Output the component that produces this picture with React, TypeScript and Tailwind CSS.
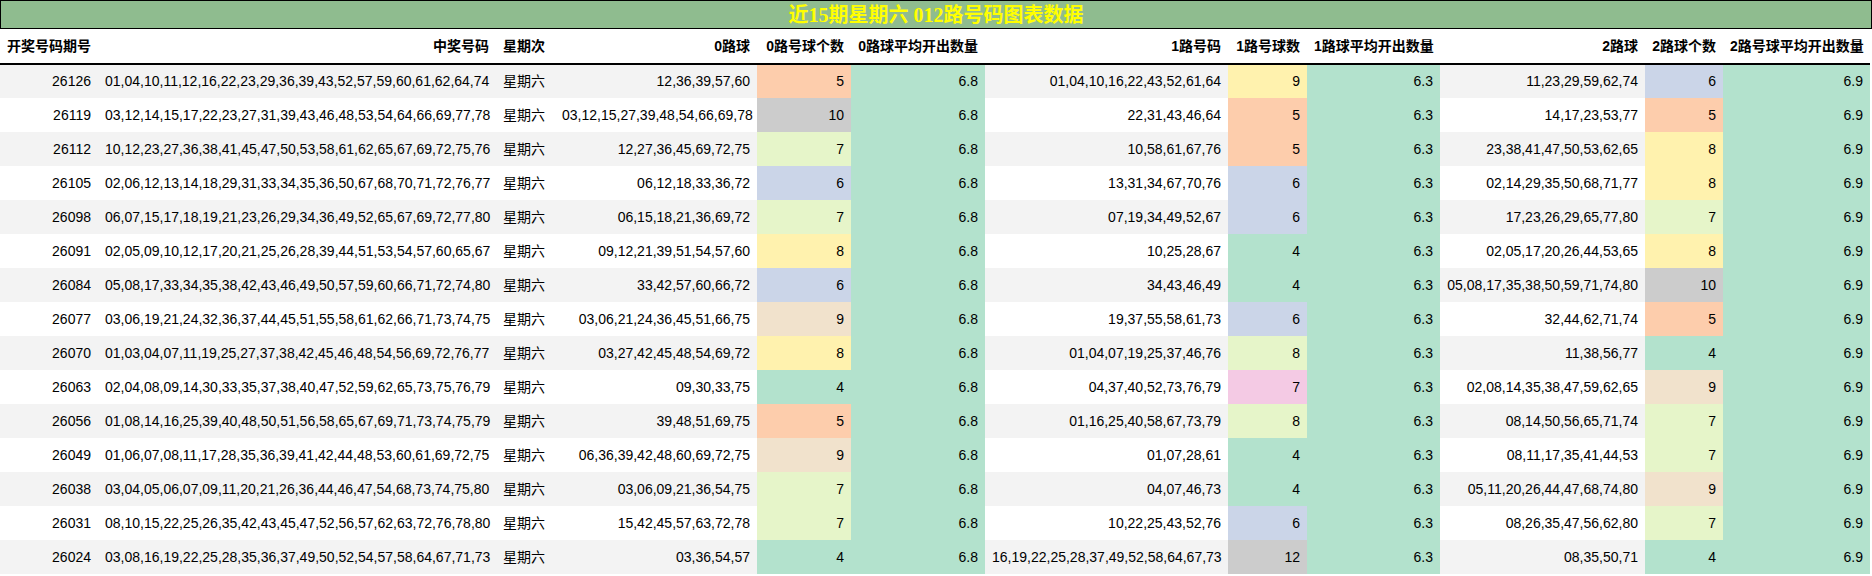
const C: Record<string, string> = {
  o: 'bg-[#fdcdac]',
  g: 'bg-[#cccccc]',
  l: 'bg-[#e6f5c9]',
  b: 'bg-[#cbd5e8]',
  y: 'bg-[#fff2ae]',
  e: 'bg-[#f1e2cc]',
  t: 'bg-[#b3e2cd]',
  p: 'bg-[#f4cae4]',
};

type Row = [string, string, string, number, string, string, number, string, string, number, string];

const rows: Row[] = [
  ['26126', '01,04,10,11,12,16,22,23,29,36,39,43,52,57,59,60,61,62,64,74', '12,36,39,57,60', 5, 'o', '01,04,10,16,22,43,52,61,64', 9, 'y', '11,23,29,59,62,74', 6, 'b'],
  ['26119', '03,12,14,15,17,22,23,27,31,39,43,46,48,53,54,64,66,69,77,78', '03,12,15,27,39,48,54,66,69,78', 10, 'g', '22,31,43,46,64', 5, 'o', '14,17,23,53,77', 5, 'o'],
  ['26112', '10,12,23,27,36,38,41,45,47,50,53,58,61,62,65,67,69,72,75,76', '12,27,36,45,69,72,75', 7, 'l', '10,58,61,67,76', 5, 'o', '23,38,41,47,50,53,62,65', 8, 'y'],
  ['26105', '02,06,12,13,14,18,29,31,33,34,35,36,50,67,68,70,71,72,76,77', '06,12,18,33,36,72', 6, 'b', '13,31,34,67,70,76', 6, 'b', '02,14,29,35,50,68,71,77', 8, 'y'],
  ['26098', '06,07,15,17,18,19,21,23,26,29,34,36,49,52,65,67,69,72,77,80', '06,15,18,21,36,69,72', 7, 'l', '07,19,34,49,52,67', 6, 'b', '17,23,26,29,65,77,80', 7, 'l'],
  ['26091', '02,05,09,10,12,17,20,21,25,26,28,39,44,51,53,54,57,60,65,67', '09,12,21,39,51,54,57,60', 8, 'y', '10,25,28,67', 4, 't', '02,05,17,20,26,44,53,65', 8, 'y'],
  ['26084', '05,08,17,33,34,35,38,42,43,46,49,50,57,59,60,66,71,72,74,80', '33,42,57,60,66,72', 6, 'b', '34,43,46,49', 4, 't', '05,08,17,35,38,50,59,71,74,80', 10, 'g'],
  ['26077', '03,06,19,21,24,32,36,37,44,45,51,55,58,61,62,66,71,73,74,75', '03,06,21,24,36,45,51,66,75', 9, 'e', '19,37,55,58,61,73', 6, 'b', '32,44,62,71,74', 5, 'o'],
  ['26070', '01,03,04,07,11,19,25,27,37,38,42,45,46,48,54,56,69,72,76,77', '03,27,42,45,48,54,69,72', 8, 'y', '01,04,07,19,25,37,46,76', 8, 'l', '11,38,56,77', 4, 't'],
  ['26063', '02,04,08,09,14,30,33,35,37,38,40,47,52,59,62,65,73,75,76,79', '09,30,33,75', 4, 't', '04,37,40,52,73,76,79', 7, 'p', '02,08,14,35,38,47,59,62,65', 9, 'e'],
  ['26056', '01,08,14,16,25,39,40,48,50,51,56,58,65,67,69,71,73,74,75,79', '39,48,51,69,75', 5, 'o', '01,16,25,40,58,67,73,79', 8, 'l', '08,14,50,56,65,71,74', 7, 'l'],
  ['26049', '01,06,07,08,11,17,28,35,36,39,41,42,44,48,53,60,61,69,72,75', '06,36,39,42,48,60,69,72,75', 9, 'e', '01,07,28,61', 4, 't', '08,11,17,35,41,44,53', 7, 'l'],
  ['26038', '03,04,05,06,07,09,11,20,21,26,36,44,46,47,54,68,73,74,75,80', '03,06,09,21,36,54,75', 7, 'l', '04,07,46,73', 4, 't', '05,11,20,26,44,47,68,74,80', 9, 'e'],
  ['26031', '08,10,15,22,25,26,35,42,43,45,47,52,56,57,62,63,72,76,78,80', '15,42,45,57,63,72,78', 7, 'l', '10,22,25,43,52,76', 6, 'b', '08,26,35,47,56,62,80', 7, 'l'],
  ['26024', '03,08,16,19,22,25,28,35,36,37,49,50,52,54,57,58,64,67,71,73', '03,36,54,57', 4, 't', '16,19,22,25,28,37,49,52,58,64,67,73', 12, 'g', '08,35,50,71', 4, 't'],
];

const heads = ['开奖号码期号', '中奖号码', '星期次', '0路球', '0路号球个数', '0路球平均开出数量', '1路号码', '1路号球数', '1路球平均开出数量', '2路球', '2路球个数', '2路号球平均开出数量'];
const widths = ['w-[98px]', 'w-[398px]', 'w-[59px]', 'w-[202px]', 'w-[94px]', 'w-[134px]', 'w-[243px]', 'w-[79px]', 'w-[133px]', 'w-[205px]', 'w-[78px]', 'w-[147px]'];

export default function App() {
  return (
    <div className="w-[1872px] h-[576px] bg-white text-[14px] text-black overflow-hidden" style={{ fontFamily: '"Liberation Sans", "Noto Sans CJK SC", sans-serif' }}>
      <div className="h-[29px] border border-black bg-[#8fbc8f] flex items-center justify-center text-[20px] font-bold text-[#ffff00]" style={{ fontFamily: '"Liberation Serif", "Noto Sans CJK SC", serif' }}>
        近15期星期六 012路号码图表数据
      </div>
      <table className="table-fixed border-collapse w-[1870px] whitespace-nowrap">
        <thead>
          <tr className="h-[35px] border-b-2 border-black font-bold">
            {heads.map((h, i) => (
              <th key={h} className={`${widths[i]} px-[7px] font-bold ${i === 0 || i === 2 ? 'text-left' : 'text-right'}`}>
                {h}
              </th>
            ))}
          </tr>
        </thead>
        <tbody>
          {rows.map((r, i) => (
            <tr key={r[0]} className={`h-[34px] ${i % 2 === 0 ? 'bg-[#f3f3f3]' : 'bg-white'}`}>
              <td className="text-right px-[7px]">{r[0]}</td>
              <td className="text-right px-[7px]">{r[1]}</td>
              <td className="text-left px-[7px]">星期六</td>
              <td className="text-right px-[7px]">{r[2]}</td>
              <td className={`text-right px-[7px] ${C[r[4]]}`}>{r[3]}</td>
              <td className="text-right px-[7px] bg-[#b3e2cd]">6.8</td>
              <td className="text-right px-[7px] overflow-visible">{r[5]}</td>
              <td className={`text-right px-[7px] ${C[r[7]]}`}>{r[6]}</td>
              <td className="text-right px-[7px] bg-[#b3e2cd]">6.3</td>
              <td className="text-right px-[7px]">{r[8]}</td>
              <td className={`text-right px-[7px] ${C[r[10]]}`}>{r[9]}</td>
              <td className="text-right px-[7px] bg-[#b3e2cd]">6.9</td>
            </tr>
          ))}
        </tbody>
      </table>
    </div>
  );
}
